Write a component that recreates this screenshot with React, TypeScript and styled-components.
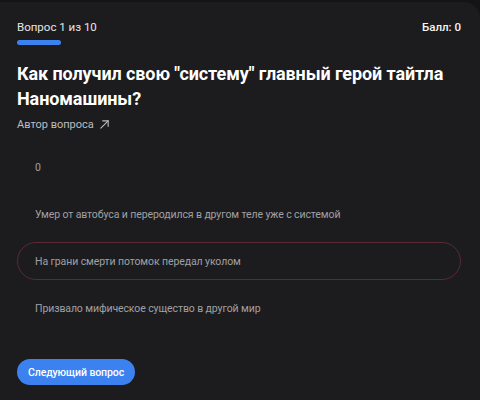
import React, { useState } from 'react'
import styled, { createGlobalStyle } from 'styled-components'

const GlobalStyle = createGlobalStyle`
  html, body {
    margin: 0;
    padding: 0;
    background-color: #141416;
  }
  body {
    font-family: Roboto, "Noto Sans", sans-serif;
  }
`

const Card = styled.div`
  box-sizing: border-box;
  width: 480px;
  height: 398px;
  margin-top: 2px;
  background-color: #1c1c1f;
  border-radius: 0 16px 0 0;
  padding: 17px 19px 0 17px;
  display: flex;
  flex-direction: column;
  color: #f2f2f2;
`

const Header = styled.div`
  display: flex;
  justify-content: space-between;
  align-items: flex-start;
`

const Counter = styled.div`
  font-size: 11.5px;
  line-height: 16px;
  color: #e6e6e6;
`

const Score = styled.div`
  font-size: 11.5px;
  line-height: 16px;
  font-weight: 500;
  color: #f5f5f5;
`

const Track = styled.div`
  width: 440px;
  height: 5px;
  margin-top: 5px;
`

const Fill = styled.div`
  height: 100%;
  border-radius: 3px;
  background-color: #3b82f0;
`

const Question = styled.h1`
  margin: 16px 0 0;
  font-size: 18px;
  line-height: 25px;
  font-weight: 700;
  letter-spacing: -0.1px;
  color: #ffffff;
`

const AuthorLink = styled.a`
  margin-top: 7px;
  display: flex;
  align-items: center;
  gap: 5px;
  font-size: 11px;
  color: #bdbdc0;
  text-decoration: none;
  align-self: flex-start;
`

const Options = styled.div`
  margin-top: 17px;
  display: flex;
  flex-direction: column;
  gap: 9px;
`

const Option = styled.div<{ $selected?: boolean }>`
  box-sizing: border-box;
  height: 38px;
  padding: 0 17px;
  display: flex;
  align-items: center;
  border-radius: 19px;
  border: 1px solid ${props => (props.$selected ? '#5b2836' : 'transparent')};
  font-size: 10.5px;
  letter-spacing: -0.1px;
  color: #a0a0a4;
  cursor: pointer;
`

const NextButton = styled.button`
  margin-top: 32px;
  align-self: flex-start;
  height: 26px;
  padding: 0 11px;
  border: none;
  border-radius: 13px;
  background-color: #3b82f0;
  color: #ffffff;
  font-family: inherit;
  font-size: 10.5px;
  letter-spacing: -0.1px;
  font-weight: 500;
`

const options = [
  '0',
  'Умер от автобуса и переродился в другом теле уже с системой',
  'На грани смерти потомок передал уколом',
  'Призвало мифическое существо в другой мир',
]

const App: React.FC = () => {
  const [selected, setSelected] = useState(2)

  return (
    <>
      <GlobalStyle />
      <Card>
        <Header>
          <Counter>Вопрос 1 из 10</Counter>
          <Score>Балл: 0</Score>
        </Header>
        <Track>
          <Fill style={{ width: `${(1 / 10) * 100}%` }} />
        </Track>
        <Question>Как получил свою "систему" главный герой тайтла Наномашины?</Question>
        <AuthorLink href="#">
          Автор вопроса
          <svg width="11" height="11" viewBox="0 0 12 12" fill="none" stroke="#bdbdc0" strokeWidth="1.2" strokeLinecap="round">
            <path d="M2 10 L10 2" />
            <path d="M4 2 H10 V8" />
          </svg>
        </AuthorLink>
        <Options>
          {options.map((text, i) => (
            <Option key={i} $selected={i === selected} onClick={() => setSelected(i)}>
              {text}
            </Option>
          ))}
        </Options>
        <NextButton>Следующий вопрос</NextButton>
      </Card>
    </>
  )
}

export default App
